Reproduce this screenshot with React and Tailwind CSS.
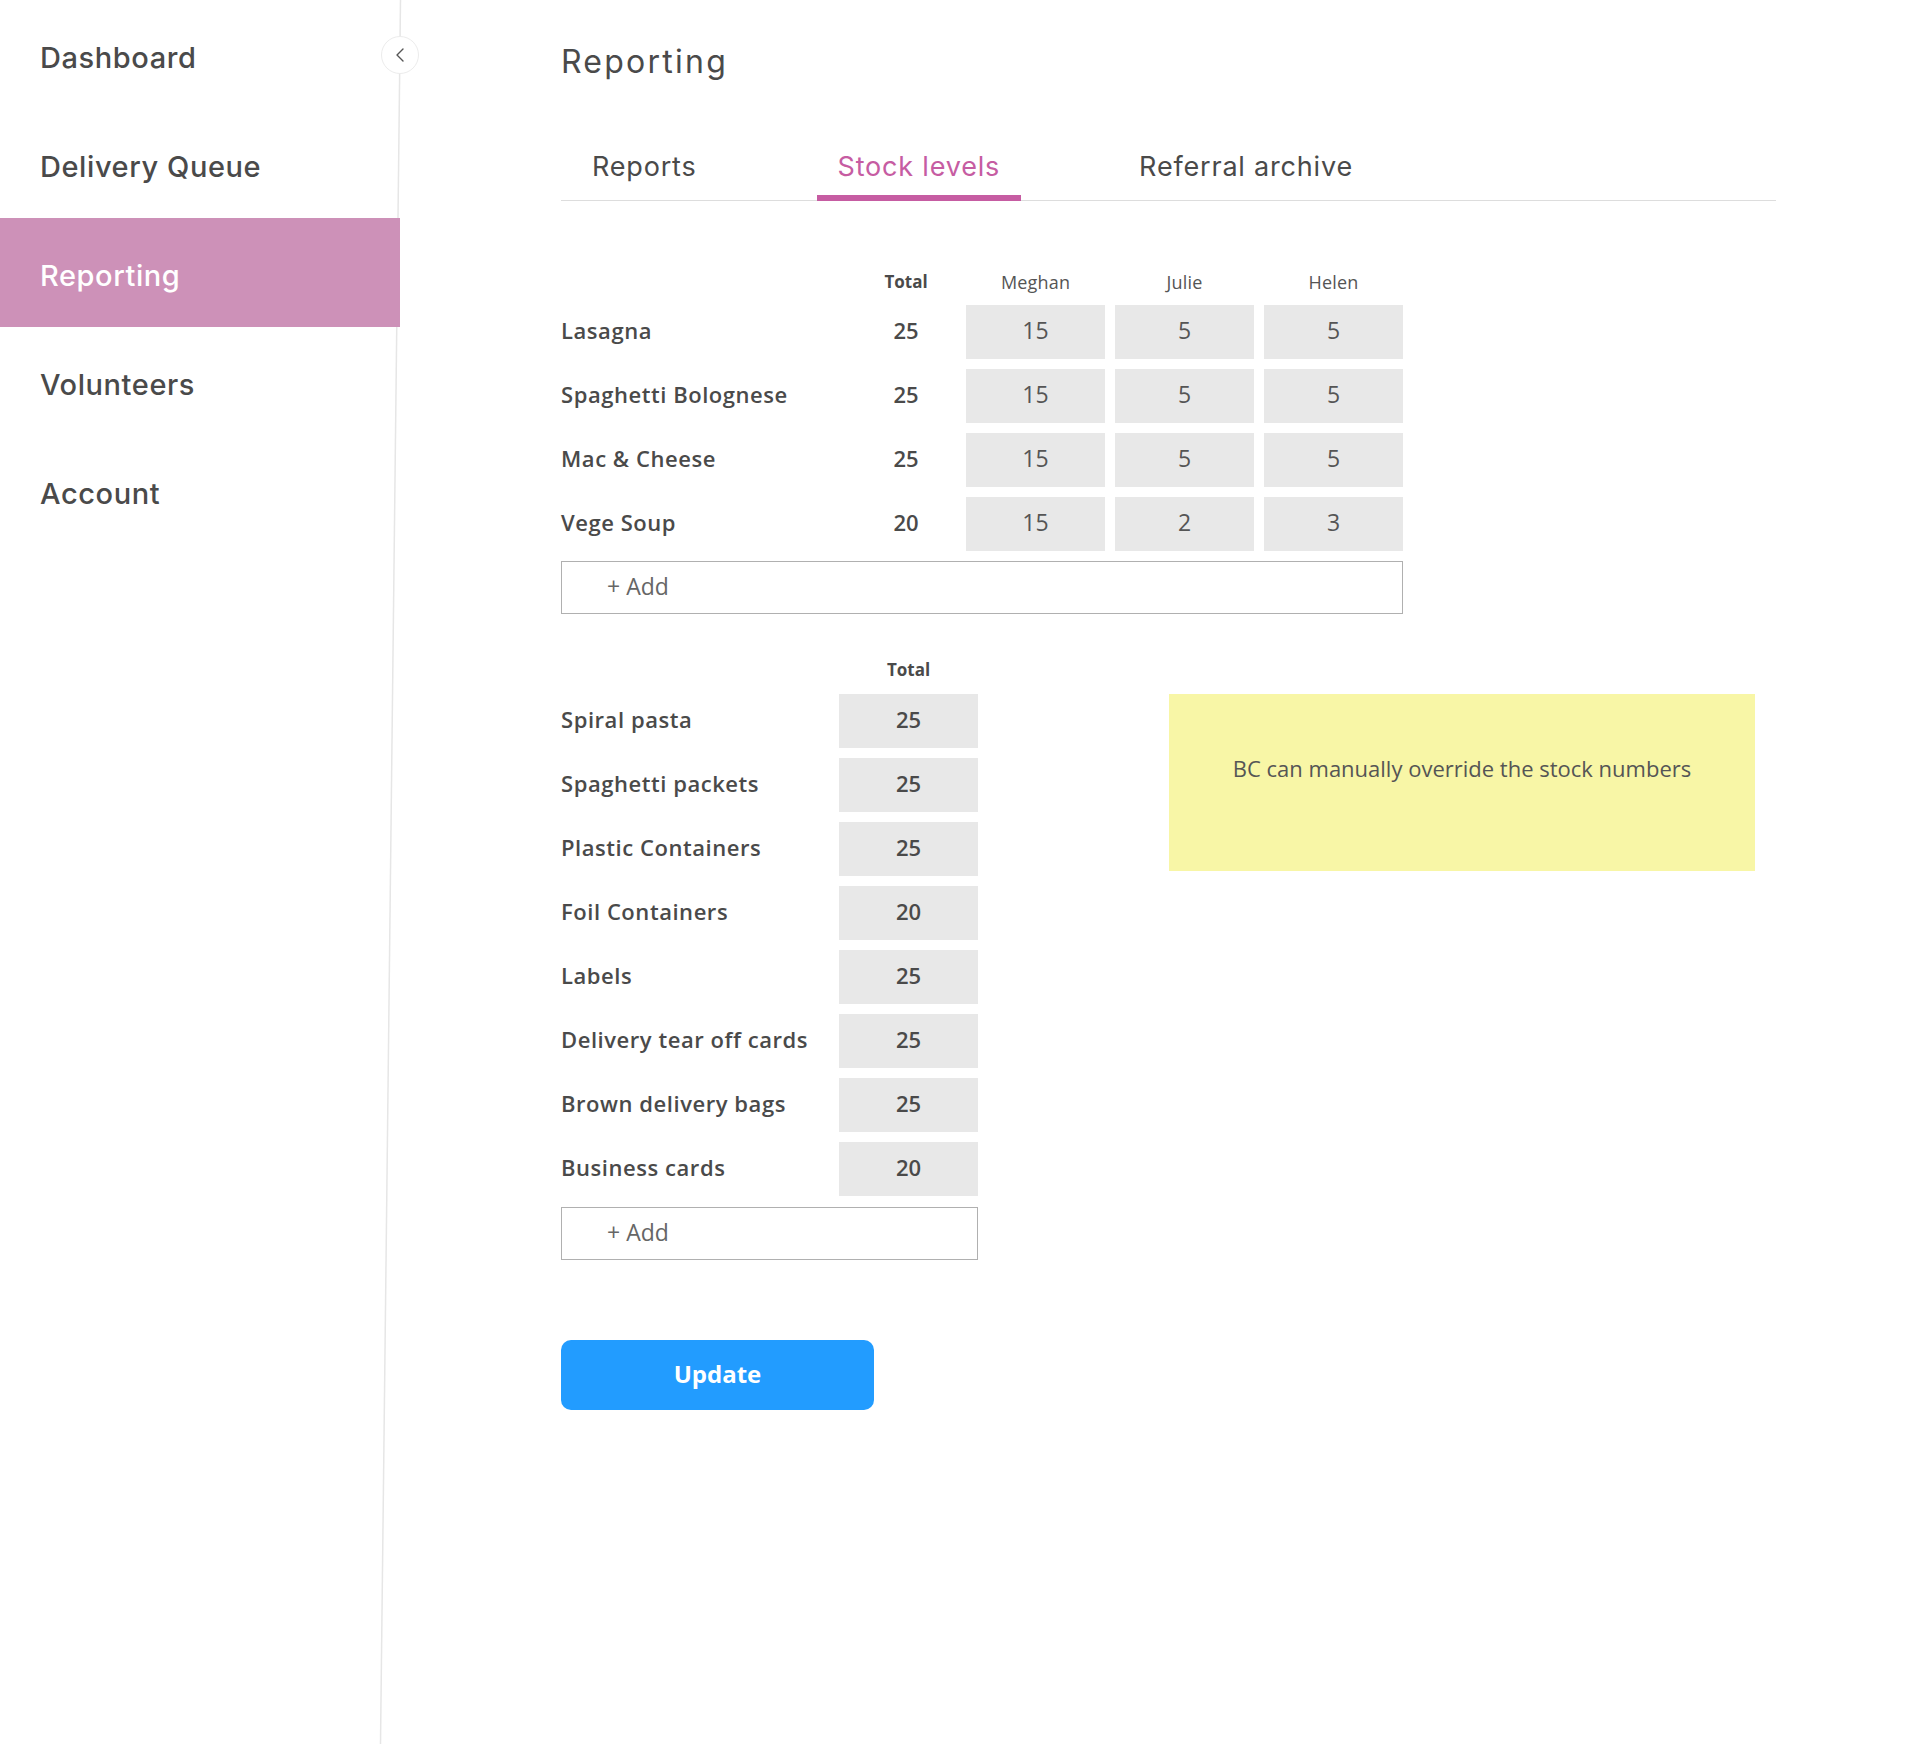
import React from "react";
import { ChevronLeft } from "lucide-react";

const navItems = ["Dashboard", "Delivery Queue", "Reporting", "Volunteers", "Account"];

const meals = [
  ["Lasagna", 25, 15, 5, 5],
  ["Spaghetti Bolognese", 25, 15, 5, 5],
  ["Mac & Cheese", 25, 15, 5, 5],
  ["Vege Soup", 20, 15, 2, 3],
];

const supplies = [
  ["Spiral pasta", 25],
  ["Spaghetti packets", 25],
  ["Plastic Containers", 25],
  ["Foil Containers", 20],
  ["Labels", 25],
  ["Delivery tear off cards", 25],
  ["Brown delivery bags", 25],
  ["Business cards", 20],
];

export default function App() {
  return (
    <div className="relative flex min-h-[1744px] bg-white font-['Open_Sans',sans-serif] text-[#4a4a4a]">
      {/* sidebar divider line (slightly slanted) */}
      <svg className="pointer-events-none absolute left-0 top-0" width="420" height="1744">
        <line x1="400.5" y1="0" x2="380.5" y2="1744" stroke="#e6e6e6" strokeWidth="1.5" />
      </svg>

      <aside className="relative w-[400px] shrink-0">
        {navItems.map((item) => (
          <div
            key={item}
            className={
              "flex h-[109px] items-center pl-[40px] pt-[6px] font-['Inter',sans-serif] text-[29px] font-medium tracking-[0.02em] " +
              (item === "Reporting" ? "bg-[#cd91b8] text-white" : "text-[#4a4a4a]")
            }
          >
            {item}
          </div>
        ))}
        <button className="absolute left-[381px] top-[36px] flex h-[38px] w-[38px] items-center justify-center rounded-full border border-[#ececec] bg-white text-[#555]">
          <ChevronLeft size={24} strokeWidth={1.4} />
        </button>
      </aside>

      <main className="flex-1 pl-[161px] pt-[47px]">
        <h1 className="font-['Inter',sans-serif] text-[32px] font-normal leading-[30px] tracking-[0.07em] text-[#4a4a4a]">
          Reporting
        </h1>

        <div className="mt-[77px] flex w-[1215px] items-end border-b border-[#dddddd] font-['Inter',sans-serif] text-[27px] leading-[26px] tracking-[0.03em]">
          <div className="ml-[10px] px-[21px] pb-[20px] text-[#4a4a4a]">Reports</div>
          <div className="relative ml-[99px] px-[21px] pb-[20px] text-[#c65ca2]">
            Stock levels
            <div className="absolute bottom-[-1px] left-0 right-0 h-[6px] bg-[#c65ca2]" />
          </div>
          <div className="ml-[97px] px-[21px] pb-[20px] text-[#4a4a4a]">Referral archive</div>
        </div>

        {/* Meals table */}
        <div className="mt-[71px] grid grid-cols-[285px_100px_139px_139px_139px] gap-x-[10px]">
          <div className="h-[33px]" />
          <div className="h-[33px] text-center text-[17px] font-bold leading-[20px]">Total</div>
          <div className="h-[33px] text-center text-[18px] leading-[20px] tracking-[0.01em] text-[#555]">Meghan</div>
          <div className="h-[33px] text-center text-[18px] leading-[20px] tracking-[0.01em] text-[#555]">Julie</div>
          <div className="h-[33px] text-center text-[18px] leading-[20px] tracking-[0.01em] text-[#555]">Helen</div>
        </div>
        <div className="grid grid-cols-[285px_100px_139px_139px_139px] gap-x-[10px] gap-y-[10px]">
          {meals.map(([name, total, a, b, c]) => (
            <React.Fragment key={name}>
              <div className="flex h-[54px] items-center pb-[4px] text-[22px] font-semibold tracking-[0.025em]">{name}</div>
              <div className="flex h-[54px] items-center justify-center pb-[3px] text-[22px] font-semibold">{total}</div>
              {[a, b, c].map((v, i) => (
                <div key={i} className="flex h-[54px] items-center justify-center bg-[#e8e8e8] pb-[3px] text-[23px] text-[#555]">
                  {v}
                </div>
              ))}
            </React.Fragment>
          ))}
          <div className="col-span-5 flex h-[53px] items-center border border-[#b0b0b0] pb-[2px] pl-[45px] text-[23px] text-[#666]">
            + Add
          </div>
        </div>

        {/* Supplies table + note */}
        <div className="mt-[46px] flex items-start">
          <div className="w-[417px]">
            <div className="grid grid-cols-[268px_139px] gap-x-[10px]">
              <div className="h-[34px]" />
              <div className="h-[34px] text-center text-[17px] font-bold leading-[20px]">Total</div>
            </div>
            <div className="grid grid-cols-[268px_139px] gap-x-[10px] gap-y-[10px]">
              {supplies.map(([name, total]) => (
                <React.Fragment key={name}>
                  <div className="flex h-[54px] items-center pb-[4px] text-[22px] font-semibold tracking-[0.025em]">{name}</div>
                  <div className="flex h-[54px] items-center justify-center bg-[#e8e8e8] pb-[4px] text-[22px] font-semibold">
                    {total}
                  </div>
                </React.Fragment>
              ))}
              <div className="col-span-2 mt-[1px] flex h-[53px] items-center border border-[#b0b0b0] pb-[2px] pl-[45px] text-[23px] text-[#666]">
                + Add
              </div>
            </div>
          </div>

          <div className="ml-[191px] mt-[34px] h-[177px] w-[586px] bg-[#f8f6a6] pt-[60px] text-center text-[22px] leading-[28px] text-[#555]">
            BC can manually override the stock numbers
          </div>
        </div>

        <button className="mt-[80px] flex h-[70px] w-[313px] items-center justify-center rounded-[10px] bg-[#229cff] pb-[2px] text-[24px] font-bold text-white">
          Update
        </button>
      </main>
    </div>
  );
}
